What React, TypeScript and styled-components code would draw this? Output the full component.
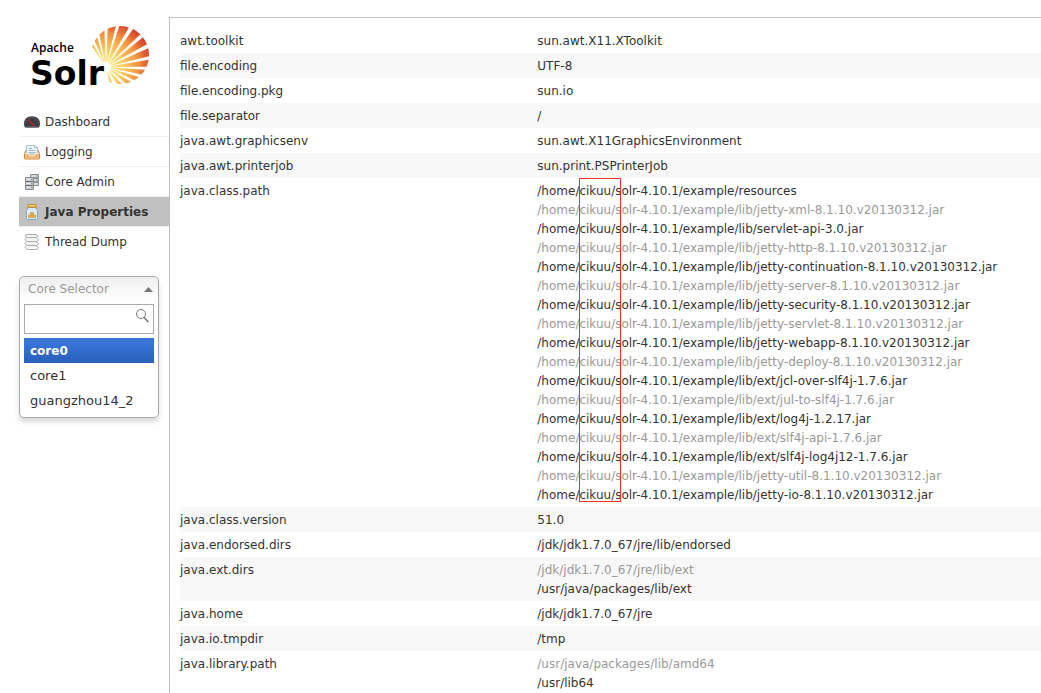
import React, { useState } from 'react';
import styled, { createGlobalStyle, css } from 'styled-components';

const GlobalStyle = createGlobalStyle`
  * { box-sizing: border-box; }
  body {
    margin: 0;
    background: #fff;
    color: #333;
    font: 12px/19px "DejaVu Sans", Verdana, sans-serif;
  }
  ul { list-style: none; margin: 0; padding: 0; }
`;

const Page = styled.div`
  display: flex;
  min-height: 100vh;
  padding-top: 17px;
  overflow: hidden;
`;

const Sidebar = styled.aside`
  flex: 0 0 169px;
  min-width: 0;
  padding-left: 19px;
`;

const LogoLink = styled.a`
  display: block;
  height: 90px;
  svg { display: block; }
`;

const MenuItem = styled.li`
  border-bottom: 1px solid #f0f0f0;
  &:last-child { border-bottom: 0; }
`;

const MenuLink = styled.a<{ $active?: boolean }>`
  display: flex;
  align-items: center;
  gap: 5px;
  height: 29px;
  padding-left: 5px;
  color: #333;
  text-decoration: none;
  white-space: nowrap;
  ${(p) => p.$active && css`
    background: #c0c0c0;
    font-weight: bold;
  `}
  svg { flex: none; }
`;

const MenuLabel = styled.span`
  padding-top: 2px;
`;

const Selector = styled.section`
  margin: 20px 10px 0 0;
  border: 1px solid #aaa;
  border-radius: 5px;
  background: #fff;
  box-shadow: 0 4px 5px rgba(0, 0, 0, 0.15);
`;

const SelectorToggle = styled.button`
  display: flex;
  align-items: center;
  justify-content: space-between;
  width: 100%;
  height: 23px;
  padding: 2px 5px 0 8px;
  border: 0;
  border-radius: 5px 5px 0 0;
  background: linear-gradient(#eee, #fff);
  color: #999;
  font: inherit;
`;

const SearchField = styled.label`
  display: flex;
  align-items: flex-start;
  height: 30px;
  margin: 4px 4px 0;
  border: 1px solid #aaa;
  background: #fff;
`;

const SearchInput = styled.input`
  flex: 1;
  min-width: 0;
  height: 28px;
  padding: 4px 5px;
  border: 0;
  outline: 0;
  background: transparent;
  font: inherit;
`;

const CoreList = styled.ul`
  && { padding: 4px; }
`;

const CoreOption = styled.button<{ $active?: boolean }>`
  display: block;
  width: 100%;
  height: 25px;
  padding: 0 6px;
  border: 0;
  background: transparent;
  color: #333;
  font-family: inherit;
  font-size: 13px;
  text-align: left;
  ${(p) => p.$active && css`
    background: linear-gradient(#3875d7 20%, #2a62bc 90%);
    color: #fff;
    font-size: 12px;
    font-weight: bold;
  `}
`;

const Main = styled.main`
  flex: 1;
  min-width: 0;
  padding: 10px 0 0 10px;
  border-top: 1px solid #c0c0c0;
  border-left: 1px solid #c0c0c0;
`;

const PropertyTable = styled.table`
  width: 100%;
  border-collapse: collapse;
  table-layout: fixed;
`;

const PropertyRow = styled.tr`
  &:nth-child(even) { background: #f8f8f8; }
`;

const PropertyName = styled.th`
  width: 41.5%;
  padding: 4px 0 2px;
  font-weight: normal;
  text-align: left;
  vertical-align: top;
`;

const PropertyValue = styled.td`
  position: relative;
  padding: 4px 0 2px;
  vertical-align: top;
  white-space: nowrap;
`;

const ValueLine = styled.li<{ $muted: boolean }>`
  color: ${(p) => (p.$muted ? '#999' : '#333')};
`;

const Highlight = styled.span`
  position: absolute;
  top: 0;
  bottom: 5px;
  left: 42px;
  width: 42px;
  border: 1px solid #f03030;
  pointer-events: none;
`;

/* Each ray of the sun: direction in degrees and angular width. */
const rays: [number, number][] = [
  [122, 5], [110, 7], [97, 9], [82, 11], [66, 12], [49, 11], [34, 10],
  [19, 10], [5, 9], [-8, 8], [-21, 8], [-35, 9], [-52, 10], [-73, 10],
];

const hub = { x: 87, y: 50 };
const disc = { x: 101, y: 38, r: 29 };

function rim(deg: number) {
  const a = (deg * Math.PI) / 180;
  const ux = Math.cos(a);
  const uy = -Math.sin(a);
  const dx = hub.x - disc.x;
  const dy = hub.y - disc.y;
  const b = ux * dx + uy * dy;
  const t = -b + Math.sqrt(b * b - dx * dx - dy * dy + disc.r * disc.r);
  return `${(hub.x + ux * t).toFixed(2)} ${(hub.y + uy * t).toFixed(2)}`;
}

function Logo() {
  return (
    <svg width="150" height="80" viewBox="0 0 150 80" role="img" aria-label="Apache Solr">
      <defs>
        <radialGradient id="sun" gradientUnits="userSpaceOnUse" cx="87" cy="50" r="54">
          <stop offset="0" stopColor="#fff08c" />
          <stop offset="0.3" stopColor="#fbcf62" />
          <stop offset="0.6" stopColor="#f2953f" />
          <stop offset="0.8" stopColor="#dc5230" />
          <stop offset="1" stopColor="#c3202b" />
        </radialGradient>
      </defs>
      {rays.map(([center, width]) => (
        <path
          key={center}
          d={`M${hub.x} ${hub.y}L${rim(center + width / 2)}A${disc.r} ${disc.r} 0 0 1 ${rim(center - width / 2)}Z`}
          fill="url(#sun)"
        />
      ))}
      <circle cx={hub.x} cy={hub.y} r="5" fill="#fff" />
      <text x="12" y="35" fontFamily="Open Sans, sans-serif" fontSize="12" fontWeight="600" fill="#000">Apache</text>
      <text x="11" y="68" fontFamily="DejaVu Sans, sans-serif" fontSize="33" fontWeight="bold" fill="#000">Solr</text>
    </svg>
  );
}

function DashboardIcon() {
  return (
    <svg width="16" height="16" viewBox="0 0 16 16" aria-hidden="true">
      <path d="M0 9.500C0 5 3.500 2.200 8 2.200S16 5 16 9.500c0 1.500-.4 3-1.200 4H1.200C.4 12.500 0 11 0 9.500z" fill="#3c3c42" />
      <path d="M1.500 9.500C1.700 6 4.500 3.600 8 3.600s6.300 2.400 6.500 5.900" fill="none" stroke="#77777d" strokeDasharray="1 1.600" />
      <path d="M3 12h10v1.500H3z" fill="#5a5a60" />
      <path d="M4.200 5.600l5.600 6" stroke="#d8202c" strokeWidth="1.300" />
    </svg>
  );
}

function LoggingIcon() {
  return (
    <svg width="16" height="16" viewBox="0 0 16 16" aria-hidden="true">
      <path d="M2.500 5.500h11l2 4v4.500a1 1 0 0 1-1 1h-13a1 1 0 0 1-1-1V9.500z" fill="#f6d3a4" stroke="#c58a4d" />
      <path d="M2.500 1.500h8l3 2v6.500h-11z" fill="#eef7fa" stroke="#a9c3cb" />
      <path d="M10.500 1.500v2h3M4.500 4.500h4M4.500 6.500h7M4.500 8.500h7" fill="none" stroke="#9fc3ce" />
      <path d="M1 9.500h3.500l1 2h5l1-2H15v5H1z" fill="#f3b873" />
      <path d="M1 9.500h3.500l1 2h5l1-2H15" fill="none" stroke="#fff0d8" />
    </svg>
  );
}

function CoreAdminIcon() {
  return (
    <svg width="16" height="16" viewBox="0 0 16 16" aria-hidden="true">
      <path d="M6.500 .500h8v11h-8z" fill="#c4c7c9" stroke="#8b8e92" />
      <path d="M7 4h7M7 8h7" stroke="#696c70" />
      <path d="M7.500 2h6M7.500 6h6M7.500 10h6" stroke="#eceeef" />
      <path d="M1.500 3.500h8v12h-8z" fill="#c4c7c9" stroke="#8b8e92" />
      <path d="M2 7.500h7M2 11.500h7" stroke="#696c70" />
      <path d="M2.500 5.500h4M2.500 9.500h4M2.500 13.500h4" stroke="#f2f3f4" />
      <path d="M7 5.500h1.500M7 9.500h1.500M7 13.500h1.500M12 2h1.500M12 6h1.500" stroke="#69a873" />
    </svg>
  );
}

function JavaIcon() {
  return (
    <svg width="16" height="16" viewBox="0 0 16 16" aria-hidden="true">
      <path d="M4.500 3.500h7l2 3v8a1 1 0 0 1-1 1h-9a1 1 0 0 1-1-1v-8z" fill="#dcebf5" stroke="#7fa2bd" />
      <path d="M4 .500h8v3H4z" fill="#efb54a" stroke="#bf8634" />
      <path d="M5 1.500h6" stroke="#ffdf91" />
      <path d="M6.500 8.500h3v2h-3zM4.500 11h3v2.500h-3zM8.500 11h3v2.500h-3z" fill="#f0b64e" stroke="#c58f3b" strokeWidth=".7" />
      <path d="M3.500 7v7" stroke="#fff" />
    </svg>
  );
}

function ThreadIcon() {
  return (
    <svg width="16" height="16" viewBox="0 0 16 16" aria-hidden="true">
      <g fill="#f4f4f4" stroke="#adadad" strokeLinejoin="round">
        <path d="M1 13.500L3 11.500h9l2.500 2-1.500 2H3z" />
        <path d="M1 9.500L3 7.500h9l2.500 2-1.500 2H3z" />
        <path d="M1 5.500L3 3.500h9l2.500 2-1.500 2H3z" />
        <path d="M1 2L3 .500h9L14.500 2 13 3.500H3z" />
      </g>
    </svg>
  );
}

function CaretUp() {
  return (
    <svg width="9" height="5" viewBox="0 0 9 5" aria-hidden="true">
      <path d="M0 5L4.500 0 9 5z" fill="#777" />
    </svg>
  );
}

function SearchIcon() {
  return (
    <svg width="20" height="20" viewBox="0 0 20 20" aria-hidden="true">
      <circle cx="8" cy="9" r="4.500" fill="none" stroke="#777" />
      <path d="M11 12.500l4.500 4.500" stroke="#666" strokeWidth="1.300" />
    </svg>
  );
}

const menu = [
  { label: 'Dashboard', Icon: DashboardIcon },
  { label: 'Logging', Icon: LoggingIcon },
  { label: 'Core Admin', Icon: CoreAdminIcon },
  { label: 'Java Properties', Icon: JavaIcon, active: true },
  { label: 'Thread Dump', Icon: ThreadIcon },
];

const cores = ['core0', 'core1', 'guangzhou14_2'];

const home = '/home/cikuu/solr-4.10.1/example/';

const properties: { name: string; values: string[]; highlight?: boolean }[] = [
  { name: 'awt.toolkit', values: ['sun.awt.X11.XToolkit'] },
  { name: 'file.encoding', values: ['UTF-8'] },
  { name: 'file.encoding.pkg', values: ['sun.io'] },
  { name: 'file.separator', values: ['/'] },
  { name: 'java.awt.graphicsenv', values: ['sun.awt.X11GraphicsEnvironment'] },
  { name: 'java.awt.printerjob', values: ['sun.print.PSPrinterJob'] },
  {
    name: 'java.class.path',
    highlight: true,
    values: [
      'resources',
      'lib/jetty-xml-8.1.10.v20130312.jar',
      'lib/servlet-api-3.0.jar',
      'lib/jetty-http-8.1.10.v20130312.jar',
      'lib/jetty-continuation-8.1.10.v20130312.jar',
      'lib/jetty-server-8.1.10.v20130312.jar',
      'lib/jetty-security-8.1.10.v20130312.jar',
      'lib/jetty-servlet-8.1.10.v20130312.jar',
      'lib/jetty-webapp-8.1.10.v20130312.jar',
      'lib/jetty-deploy-8.1.10.v20130312.jar',
      'lib/ext/jcl-over-slf4j-1.7.6.jar',
      'lib/ext/jul-to-slf4j-1.7.6.jar',
      'lib/ext/log4j-1.2.17.jar',
      'lib/ext/slf4j-api-1.7.6.jar',
      'lib/ext/slf4j-log4j12-1.7.6.jar',
      'lib/jetty-util-8.1.10.v20130312.jar',
      'lib/jetty-io-8.1.10.v20130312.jar',
    ].map((file) => home + file),
  },
  { name: 'java.class.version', values: ['51.0'] },
  { name: 'java.endorsed.dirs', values: ['/jdk/jdk1.7.0_67/jre/lib/endorsed'] },
  { name: 'java.ext.dirs', values: ['/jdk/jdk1.7.0_67/jre/lib/ext', '/usr/java/packages/lib/ext'] },
  { name: 'java.home', values: ['/jdk/jdk1.7.0_67/jre'] },
  { name: 'java.io.tmpdir', values: ['/tmp'] },
  { name: 'java.library.path', values: ['/usr/java/packages/lib/amd64', '/usr/lib64'] },
];

/* Lines alternate so that the last one of a value is always dark. */
const isMuted = (index: number, count: number) => (count - index) % 2 === 0;

export default function App() {
  const [core, setCore] = useState('core0');
  return (
    <>
      <GlobalStyle />
      <Page>
        <Sidebar>
          <LogoLink href="#/"><Logo /></LogoLink>
          <nav>
            <ul>
              {menu.map(({ label, Icon, active }) => (
                <MenuItem key={label}>
                  <MenuLink href="#/" $active={active}>
                    <Icon />
                    <MenuLabel>{label}</MenuLabel>
                  </MenuLink>
                </MenuItem>
              ))}
            </ul>
          </nav>
          <Selector>
            <SelectorToggle type="button">Core Selector<CaretUp /></SelectorToggle>
            <SearchField>
              <SearchInput type="text" aria-label="Search cores" />
              <SearchIcon />
            </SearchField>
            <CoreList>
              {cores.map((name) => (
                <li key={name}>
                  <CoreOption type="button" $active={name === core} onClick={() => setCore(name)}>{name}</CoreOption>
                </li>
              ))}
            </CoreList>
          </Selector>
        </Sidebar>
        <Main>
          <PropertyTable>
            <tbody>
              {properties.map(({ name, values, highlight }) => (
                <PropertyRow key={name}>
                  <PropertyName scope="row">{name}</PropertyName>
                  <PropertyValue>
                    <ul>
                      {values.map((value, i) => (
                        <ValueLine key={value} $muted={isMuted(i, values.length)}>{value}</ValueLine>
                      ))}
                    </ul>
                    {highlight && <Highlight />}
                  </PropertyValue>
                </PropertyRow>
              ))}
            </tbody>
          </PropertyTable>
        </Main>
      </Page>
    </>
  );
}
